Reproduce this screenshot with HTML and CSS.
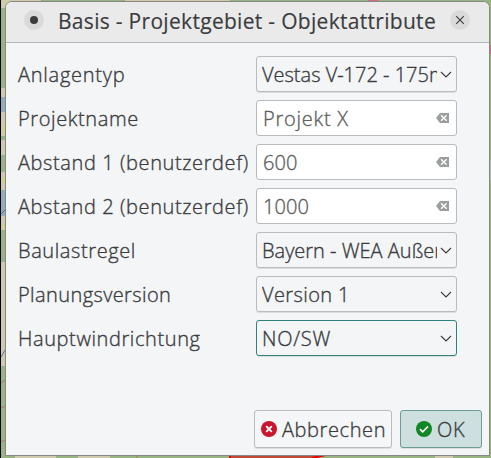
FILE: index.html
```html
<!DOCTYPE html>
<html lang="de">
<head>
<meta charset="utf-8">
<title>Basis - Projektgebiet - Objektattribute</title>
<link rel="stylesheet" href="styles.css">
</head>
<body>
<svg class="map" width="491" height="458" viewBox="0 0 491 458" aria-hidden="true">
  <rect width="491" height="458" fill="#98b481"/>
  <path d="M0 0H42V8H0ZM0 88H6V136H0ZM0 140H6V155H0ZM0 172H6V230H0ZM0 262H6V366H0ZM124 0H230V3H124Z" fill="#cfcaab"/>
  <path d="M489 160H491V180H489Z" fill="#a9bdb5"/>
  <path d="M0 97H6V112H0ZM0 190H6V216H0Z" fill="#8faebb"/>
  <path d="M1 122L5 132M1 184L5 178M1 224L5 229" stroke="#d8cf83" stroke-width="2"/>
  <path d="M1 214L5 210M1 357L5 350" stroke="#6267a8"/>
  <path d="M368 0H379V3H368ZM489 45H491V54H489Z" fill="#cf6d81"/>
  <path d="M230 455H325L312 458H231Z" fill="#c24a35"/>
  <path d="M230 455V458M312 458L326 455" stroke="#f00000" stroke-width="2" fill="none"/>
  <path d="M15 456H56V458H15ZM78 456H110V458H78ZM435 456H453V458H435Z" fill="#d0caaf"/>
  <path d="M1 383L5 380M1 408L5 406M1 442L5 440M42 0V3M124 0V3M137 456V458" stroke="#a5864b"/>
  <rect width="1" height="458" fill="#000"/>
</svg>
<main class="dialog">
  <header class="titlebar">
    <svg class="round" viewBox="0 0 20 20"><circle cx="10" cy="10" r="10" fill="#dadada"/><circle cx="10" cy="10" r="4" fill="#3c3c3c"/></svg>
    <h1 class="title">Basis - Projektgebiet - Objektattribute</h1>
    <svg class="round" viewBox="0 0 20 20"><circle cx="10" cy="10" r="10" fill="#dadada"/><path d="M6.2 6.2l7.6 7.6M13.8 6.2l-7.6 7.6" stroke="#3c3c3c" stroke-width="1.1"/></svg>
  </header>
  <form class="form">
    <div class="row"><label class="label wider">Anlagentyp</label><div class="field combo"><span class="value tight">Vestas V-172 - 175m</span><svg class="chevron" viewBox="0 0 12 8"><path d="M1 1l5 5 5-5"/></svg></div></div>
    <div class="row"><label class="label wide">Projektname</label><div class="field input"><span class="value wider">Projekt X</span><svg class="clear" viewBox="0 0 14 10"><path d="M4 0H13V10H4L0 5Z" fill="#9b9d9e"/><path d="M5 2.2l5.6 5.6M10.6 2.2L5 7.8" stroke="#fff" stroke-width="1.4"/></svg></div></div>
    <div class="row"><label class="label wide">Abstand 1 (benutzerdef)</label><div class="field input"><span class="value digits">600</span><svg class="clear" viewBox="0 0 14 10"><path d="M4 0H13V10H4L0 5Z" fill="#9b9d9e"/><path d="M5 2.2l5.6 5.6M10.6 2.2L5 7.8" stroke="#fff" stroke-width="1.4"/></svg></div></div>
    <div class="row"><label class="label wide">Abstand 2 (benutzerdef)</label><div class="field input"><span class="value digits">1000</span><svg class="clear" viewBox="0 0 14 10"><path d="M4 0H13V10H4L0 5Z" fill="#9b9d9e"/><path d="M5 2.2l5.6 5.6M10.6 2.2L5 7.8" stroke="#fff" stroke-width="1.4"/></svg></div></div>
    <div class="row"><label class="label wide">Baulastregel</label><div class="field combo"><span class="value tight">Bayern - WEA Außenbereich</span><svg class="chevron" viewBox="0 0 12 8"><path d="M1 1l5 5 5-5"/></svg></div></div>
    <div class="row"><label class="label snug">Planungsversion</label><div class="field combo"><span class="value snug">Version 1</span><svg class="chevron" viewBox="0 0 12 8"><path d="M1 1l5 5 5-5"/></svg></div></div>
    <div class="row"><label class="label wide">Hauptwindrichtung</label><div class="field combo focused"><span class="value wider">NO/SW</span><svg class="chevron" viewBox="0 0 12 8"><path d="M1 1l5 5 5-5"/></svg></div></div>
  </form>
  <footer class="actions">
    <button class="button cancel"><svg class="status" viewBox="0 0 16 16"><circle cx="8" cy="8" r="8" fill="#c9152d"/><path d="M5.2 5.2l5.6 5.6M10.8 5.2l-5.6 5.6" stroke="#fff" stroke-width="1.9"/></svg><span class="caption wide">Abbrechen</span></button>
    <button class="button ok"><svg class="status" viewBox="0 0 16 16"><circle cx="8" cy="8" r="8" fill="#138626"/><path d="M4 8.2l2.7 2.6 5.3-5.3" stroke="#fff" stroke-width="1.7" fill="none"/></svg><span class="caption wide">OK</span></button>
  </footer>
</main>
</body>
</html>
```
FILE: styles.css
```css
* { box-sizing: border-box; }
body { margin: 0; padding: 1px 1px 0 5px; width: 491px; height: 458px; overflow: hidden; font: 300 20px/26px "Open Sans", "Noto Sans", sans-serif; color: #3a3c3e; -webkit-text-stroke: 0.35px; }
.map { position: absolute; left: 0; top: 0; z-index: -1; }
.dialog { display: flex; flex-direction: column; width: 485px; height: 455px; background: #f4f5f7; border: 1px solid #858885; border-radius: 7px 7px 0 0; overflow: hidden; }
.titlebar { display: flex; align-items: center; height: 41px; padding: 0 19px 5px 18px; background: #eaeaea; border-bottom: 1px solid #b3b4b5; flex: none; }
.round { width: 20px; height: 20px; flex: none; }
.title { margin: 2px 0 0 14px; width: 392px; font-size: 21px; font-weight: 400; line-height: 28px; letter-spacing: 0.3px; white-space: nowrap; -webkit-text-stroke: 0.15px; }
.form { display: grid; gap: 8px; padding: 13px 0 0 12px; }
.row { display: flex; height: 36px; align-items: center; }
.label { width: 238px; padding-top: 2px; white-space: nowrap; flex: none; }
.tight { letter-spacing: 0; }
.snug { letter-spacing: 0.4px; }
.wide { letter-spacing: 0.6px; }
.wider { letter-spacing: 0.75px; }
.digits { letter-spacing: 0.1px; }
.field { display: flex; align-items: center; width: 201px; height: 36px; border: 1px solid #b9bbbd; border-radius: 3px; }
.combo { padding: 0 4px 0 5px; box-shadow: 0 1px 0 #dcddde; }
.input { padding: 0 6px; background: #fff; color: #5c5e60; }
.focused { border-color: #2f817c; }
.value { flex: 1; min-width: 0; padding-top: 2px; overflow: hidden; white-space: nowrap; }
.chevron { width: 12px; height: 8px; margin: 1px 0 0 3px; flex: none; fill: none; stroke: #3a3c3e; stroke-width: 1.1; }
.clear { width: 14px; height: 10px; flex: none; }
.actions { display: flex; gap: 8px; justify-content: flex-end; margin-top: auto; padding: 0 7px 7px 0; }
.button { display: flex; align-items: center; gap: 5px; height: 38px; padding: 0 6px; border: 1px solid #b9bbbd; border-radius: 3px; background: #f5f6f8; font: inherit; color: inherit; box-shadow: 0 1px 0 #dcddde; white-space: nowrap; }
.cancel { width: 138px; }
.ok { width: 82px; padding: 0 15px; background: #cddfde; border-color: #6d9b98; }
.caption { padding-top: 2px; }
.status { width: 16px; height: 16px; flex: none; }
```
